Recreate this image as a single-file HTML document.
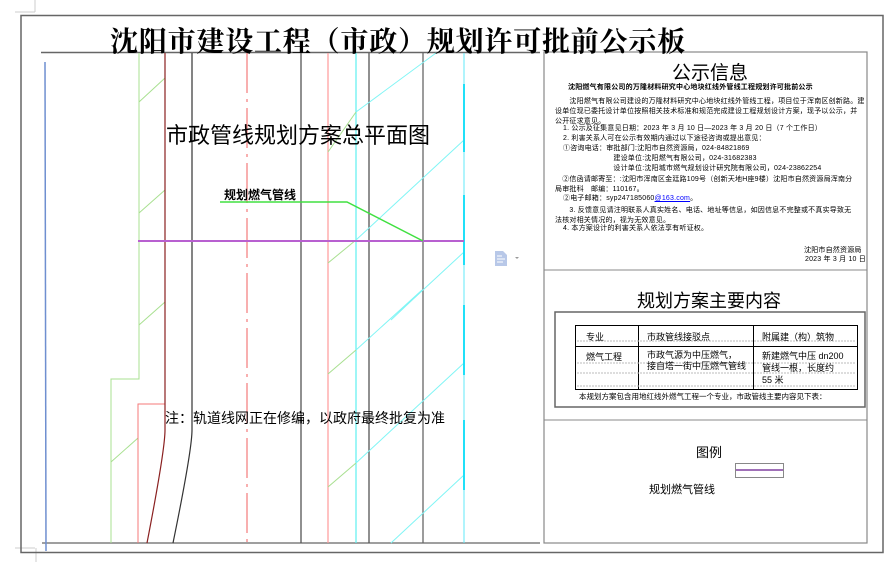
<!DOCTYPE html>
<html><head><meta charset="utf-8"><style>
body{margin:0;width:896px;height:562px;background:#fff;overflow:hidden;position:relative;font-family:"Liberation Sans","Noto Sans CJK SC",sans-serif;}
.a{position:absolute;white-space:nowrap;color:#000;}
.s{font-size:7px;line-height:10px;letter-spacing:0.2px;}
</style></head><body>
<svg width="896" height="562" style="position:absolute;left:0;top:0">
<path d="M15 12H35M35 0V12" stroke="#ccc" fill="none"/>
<path d="M15 548H35M36 548V562" stroke="#ccc" fill="none"/>
<rect x="21" y="15.5" width="862" height="537" fill="none" stroke="#666" stroke-width="1.5"/>
<line x1="41" y1="52.5" x2="540" y2="52.5" stroke="#666" stroke-width="1.5"/>
<line x1="42" y1="543" x2="540" y2="543" stroke="#666" stroke-width="1.2"/>
<line x1="45" y1="62" x2="46" y2="551" stroke="#6f8fd0" stroke-width="1.5"/>
<path d="M139 53V379H111V543" stroke="#a8e090" fill="none"/>
<path d="M139 102L165 78M139 213L165 190M139 325L165 302M111 462L138 438" stroke="#a8e090"/>
<path d="M165 404H138V543" stroke="#f47a7a" fill="none"/>
<path d="M165 53V430Q165 450 147 543" stroke="#8a2020" fill="none" stroke-width="1.2"/>
<path d="M192 53V430Q192 450 173 543" stroke="#333" fill="none" stroke-width="1.2"/>
<line x1="247" y1="53" x2="247" y2="543" stroke="#f47a7a" stroke-width="1.2" stroke-dasharray="40 6 3 6"/>
<line x1="301" y1="53" x2="301" y2="543" stroke="#555" stroke-width="1.3"/>
<line x1="328" y1="53" x2="328" y2="543" stroke="#ff9a9a" stroke-width="1.2"/>
<line x1="356" y1="53" x2="356" y2="543" stroke="#5ef0f0" stroke-width="1.2"/>
<line x1="369" y1="53" x2="369" y2="543" stroke="#555" stroke-width="1.3"/>
<line x1="423" y1="53" x2="423" y2="543" stroke="#666" stroke-width="1.3"/>
<g stroke="#80f5f5" stroke-width="1">
<path d="M436 53L356 112M464 140L356 240M464 252L410 302L391 320M422 290L356 350M464 363L356 463M464 475L391 543"/>
</g>
<g stroke="#a8e090"><path d="M356 112L328 152M356 240L328 263M356 350L328 374M356 463L328 487"/></g>
<line x1="464" y1="53" x2="464" y2="543" stroke="#60e8f8" stroke-width="1"/>
<path d="M464 84V152M464 195V265M464 305V375M464 420V490" stroke="#20e0f8" stroke-width="2"/>
<line x1="138" y1="241" x2="464" y2="241" stroke="#b860d0" stroke-width="2"/>
<path d="M220 202H347L423 241" stroke="#40e040" fill="none" stroke-width="1.5"/>
<path d="M495 251h8l4 4v11h-12z" fill="#b8c8e8"/>
<path d="M497 256h5M497 259h8M497 262h6" stroke="#fff"/>
<path d="M515 257l2 2l2-2z" fill="#999"/>
<rect x="544" y="52" width="323" height="491" fill="#fff" stroke="#888" stroke-width="1.2"/>
<line x1="544" y1="270" x2="867" y2="270" stroke="#888"/>
<line x1="544" y1="420" x2="867" y2="420" stroke="#888"/>
<rect x="555" y="312" width="310" height="95" fill="none" stroke="#666" stroke-width="1.5"/>
<rect x="575.5" y="325.5" width="282" height="64" fill="none" stroke="#000"/>
<path d="M638.5 325V389M753.5 325V389M575 346.5H857" stroke="#000"/>
<path d="M577 341H856M577 363H856M577 373H856M577 386H856" stroke="#bbb" stroke-dasharray="2 1"/>
<rect x="735.5" y="463.5" width="48" height="14" fill="none" stroke="#888"/>
<line x1="736" y1="470" x2="783" y2="470" stroke="#8040a0" stroke-width="1.5"/>
</svg>
<div class="a" style="left:110px;top:20px;font:bold 28px 'Liberation Serif','Noto Serif CJK SC',serif;letter-spacing:0.8px">沈阳市建设工程（市政）规划许可批前公示板</div>
<div class="a" style="left:166px;top:118px;font-size:22px;">市政管线规划方案总平面图</div>
<div class="a" style="left:224px;top:186px;font-size:12px;font-weight:bold">规划燃气管线</div>
<div class="a" style="left:165px;top:408px;font-size:14px;">注：轨道线网正在修编，以政府最终批复为准</div>

<div class="a" style="left:672px;top:58px;font-size:19px;">公示信息</div>
<div class="a s" style="left:568px;top:83px;font-weight:bold">沈阳燃气有限公司的万隆材料研究中心地块红线外管线工程规划许可批前公示</div>
<div class="a s" style="left:555px;top:97px">　　沈阳燃气有限公司建设的万隆材料研究中心地块红线外管线工程，项目位于浑南区创新路。建<br>设单位现已委托设计单位按照相关技术标准和规范完成建设工程规划设计方案，现予以公示，并<br>公开征求意见。</div>
<div class="a s" style="left:563px;top:124px">1. 公示及征集意见日期：2023 年 3 月 10 日—2023 年 3 月 20 日（7 个工作日）<br>2. 利害关系人可在公示有效期内通过以下途径咨询或提出意见：<br>①咨询电话：审批部门:沈阳市自然资源局，024-84821869<br>　　　　　　　建设单位:沈阳燃气有限公司，024-31682383<br>　　　　　　　设计单位:沈阳城市燃气规划设计研究院有限公司，024-23862254</div>
<div class="a s" style="left:555px;top:175px">　②信函请邮寄至：:沈阳市浑南区金廷路109号（创新天地H座9楼）沈阳市自然资源局浑南分<br>局审批科　邮编：110167。</div>
<div class="a s" style="left:563px;top:194px">②电子邮箱：syp247185060<span style="color:#00f;text-decoration:underline">@163.com</span>。</div>
<div class="a s" style="left:555px;top:206px">　　3. 反馈意见请注明联系人真实姓名、电话、地址等信息，如因信息不完整或不真实导致无<br>法核对相关情况的，视为无效意见。</div>
<div class="a s" style="left:563px;top:224px">4. 本方案设计的利害关系人依法享有听证权。</div>
<div class="a s" style="left:804px;top:246px">沈阳市自然资源局</div>
<div class="a s" style="left:805px;top:255px">2023 年 3 月 10 日</div>

<div class="a" style="left:637px;top:287px;font-size:18px;">规划方案主要内容</div>
<div class="a" style="left:586px;top:330px;font-size:9px">专业</div>
<div class="a" style="left:647px;top:330px;font-size:9px">市政管线接驳点</div>
<div class="a" style="left:762px;top:330px;font-size:9px">附属建（构）筑物</div>
<div class="a" style="left:586px;top:350px;font-size:9px">燃气工程</div>
<div class="a" style="left:647px;top:350px;font-size:9px;line-height:11px">市政气源为中压燃气，<br>接自塔一街中压燃气管线</div>
<div class="a" style="left:762px;top:350px;font-size:9px;line-height:12px">新建燃气中压 dn200<br>管线一根，长度约<br>55 米</div>
<div class="a" style="left:579px;top:391px;font-size:7.5px">本规划方案包含用地红线外燃气工程一个专业，市政管线主要内容见下表：</div>
<div class="a" style="left:696px;top:442px;font-size:13px">图例</div>
<div class="a" style="left:649px;top:481px;font-size:11px">规划燃气管线</div>
</body></html>
